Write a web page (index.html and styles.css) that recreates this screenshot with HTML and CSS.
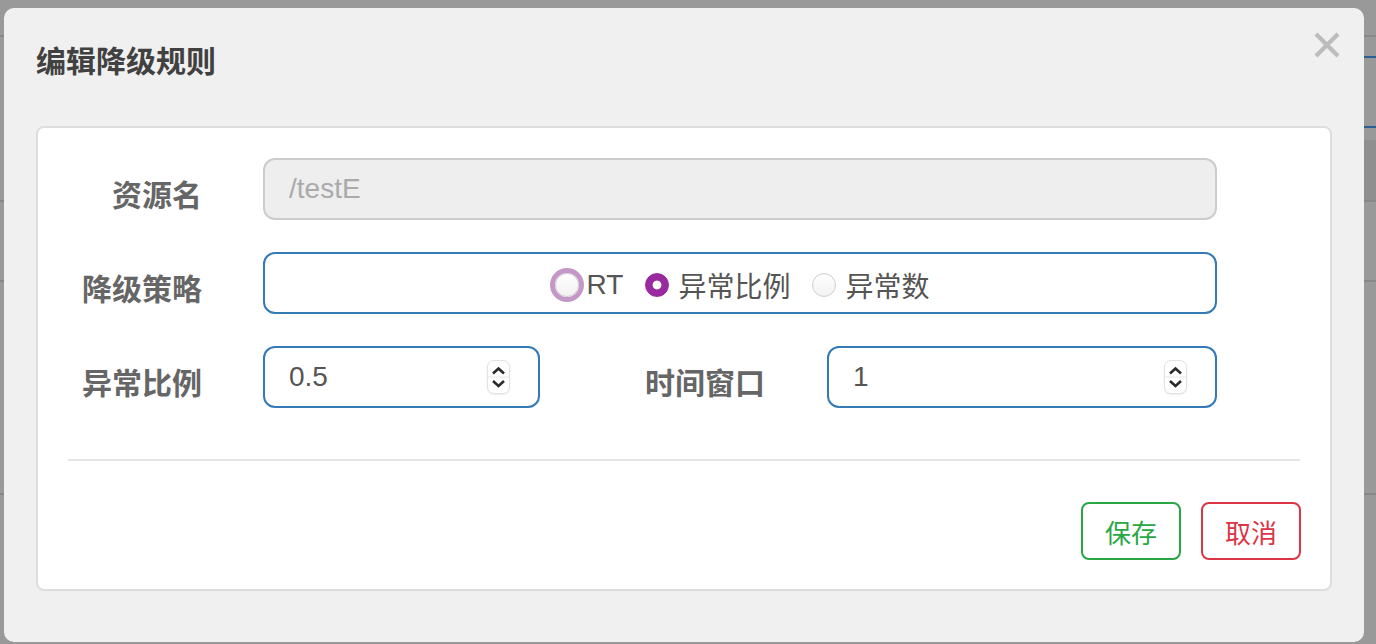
FILE: index.html
```html
<!DOCTYPE html>
<html lang="zh-CN">
<head>
  <meta charset="UTF-8"/>
  <meta name="viewport" content="width=device-width,initial-scale=1.0"/>
  <title>编辑降级规则</title>
  <link rel="stylesheet" href="styles.css">
</head>
<body>

<div class="dialog">
  <div class="dialog-header">
    <h3>编辑降级规则</h3>
    <button class="close" type="button" aria-label="关闭">
      <svg width="26" height="26" viewBox="0 0 26 26"><path d="M2 2 L24 24 M24 2 L2 24" stroke="#bcbcbc" stroke-width="4.2" fill="none"/></svg>
    </button>
  </div>

  <div class="panel">
    <div class="row">
      <label class="label">资源名</label>
      <div class="field wide disabled"><input type="text" value="/testE" disabled></div>
    </div>

    <div class="row">
      <label class="label">降级策略</label>
      <div class="field wide radios">
        <label class="opt"><span class="radio focus"></span>RT</label>
        <label class="opt"><span class="radio checked"></span>异常比例</label>
        <label class="opt"><span class="radio"></span>异常数</label>
      </div>
    </div>

    <div class="row">
      <label class="label">异常比例</label>
      <div class="field short">
        <input type="text" value="0.5">
        <span class="spin">
          <svg width="23" height="34" viewBox="0 0 23 34"><path d="M6 13.5 L11.5 8.5 L17 13.5 M6 21 L11.5 26 L17 21" stroke="#2a2a2a" stroke-width="2.6" fill="none"/><path d="M1 17 H22" stroke="#e4e4e4" stroke-width="1"/></svg>
        </span>
      </div>
      <label class="label mid">时间窗口</label>
      <div class="field medium">
        <input type="text" value="1">
        <span class="spin">
          <svg width="23" height="34" viewBox="0 0 23 34"><path d="M6 13.5 L11.5 8.5 L17 13.5 M6 21 L11.5 26 L17 21" stroke="#2a2a2a" stroke-width="2.6" fill="none"/><path d="M1 17 H22" stroke="#e4e4e4" stroke-width="1"/></svg>
        </span>
      </div>
    </div>

    <div class="divider"></div>

    <div class="actions">
      <button class="btn save" type="button">保存</button>
      <button class="btn cancel" type="button">取消</button>
    </div>
  </div>
</div>

</body>
</html>
```

FILE: styles.css
```css
/* ========== Reset & Backdrop ========== */
* { margin:0; padding:0; box-sizing:border-box }
body {
  font-family: "Liberation Sans", "Noto Sans CJK SC", sans-serif;
  color: #555;
  height: 644px;
  overflow: hidden;
  background-color: #999;
  background-image:
    linear-gradient(#2b5f8e, #2b5f8e),
    linear-gradient(#2b5f8e, #2b5f8e),
    linear-gradient(#8f8f8f, #8f8f8f),
    linear-gradient(#888, #888),
    linear-gradient(#888, #888),
    linear-gradient(#888, #888),
    linear-gradient(#888, #888);
  background-repeat: no-repeat;
  background-size: 12px 2px, 12px 2px, 12px 60px, 100% 2px, 100% 2px, 100% 2px, 100% 2px;
  background-position: right 0 top 56px, right 0 top 126px, right 0 top 140px,
                       0 35px, 0 200px, 0 280px, 0 493px;
  padding: 8px 12px 0 4px;
}

/* ========== Dialog ========== */
.dialog {
  position: relative;
  height: 634px;
  background: #f0f0f0;
  border-radius: 10px;
}
.dialog-header { padding: 36px 32px 46px }
.dialog-header h3 {
  font-size: 30px;
  line-height: 36px;
  font-weight: bold;
  color: #414141;
}
.close {
  position: absolute;
  top: 24px; right: 24px;
  border: none;
  background: none;
  width: 26px; height: 26px;
  cursor: pointer;
}
.close svg { display:block }

/* ========== Form panel ========== */
.panel {
  margin: 0 32px;
  background: #fff;
  border: 2px solid #ddd;
  border-radius: 8px;
  padding: 30px 0 29px;
}
.row {
  display: flex;
  align-items: center;
  height: 62px;
  margin-bottom: 32px;
}
.row:last-of-type { margin-bottom: 0 }
.label {
  width: 225px;
  padding: 8px 61px 0 0;
  text-align: right;
  font-size: 30px;
  font-weight: bold;
  color: #666;
}
.label.mid { width: 287px; padding-right: 62px }

.field {
  display: flex;
  align-items: center;
  height: 62px;
  border: 2px solid #337ab7;
  border-radius: 12px;
  background: #fff;
  padding: 0 28px 0 24px;
}
.field.wide { width: 954px }
.field.short { width: 277px }
.field.medium { width: 390px }
.field.disabled { background: #eee; border-color: #ccc }
.field input {
  flex: 1;
  min-width: 0;
  border: none;
  outline: none;
  background: transparent;
  font-family: inherit;
  font-size: 28px;
  color: #555;
}
.field.disabled input { color: #aaa }

.spin {
  width: 23px; height: 34px;
  border: 1px solid #e2e2e2;
  border-radius: 7px;
  background: #fff;
  box-shadow: 0 1px 2px rgba(0,0,0,0.08);
  overflow: hidden;
}
.spin svg { display:block; margin:-1px }

/* ========== Radios ========== */
.radios { justify-content: center; gap: 22px; padding: 4px 24px 0 28px }
.opt {
  display: flex;
  align-items: center;
  font-size: 28px;
  color: #555;
}
.radio {
  width: 24px; height: 24px;
  margin-right: 9px;
  border-radius: 50%;
  border: 1px solid #cfcfcf;
  background: linear-gradient(#fff, #f2f2f2);
  box-shadow: inset 0 1px 1px rgba(0,0,0,0.04);
}
.radio.focus { margin-right: 8px; box-shadow: 0 0 0 5px #c497c7 }
.radio.checked {
  border-color: #9a2a9f;
  background: radial-gradient(circle, #fff 0 4px, #9a2a9f 4.8px);
}

/* ========== Footer ========== */
.divider {
  height: 2px;
  margin: 51px 30px 0;
  background: #e5e5e5;
}
.actions {
  display: flex;
  justify-content: flex-end;
  gap: 20px;
  padding: 41px 29px 0;
}
.btn {
  width: 100px; height: 58px;
  border: 2px solid;
  border-radius: 8px;
  background: #fff;
  font-family: inherit;
  font-size: 26px;
  cursor: pointer;
}
.btn.save { color: #28a745; border-color: #28a745 }
.btn.cancel { color: #dc3545; border-color: #dc3545 }
```
